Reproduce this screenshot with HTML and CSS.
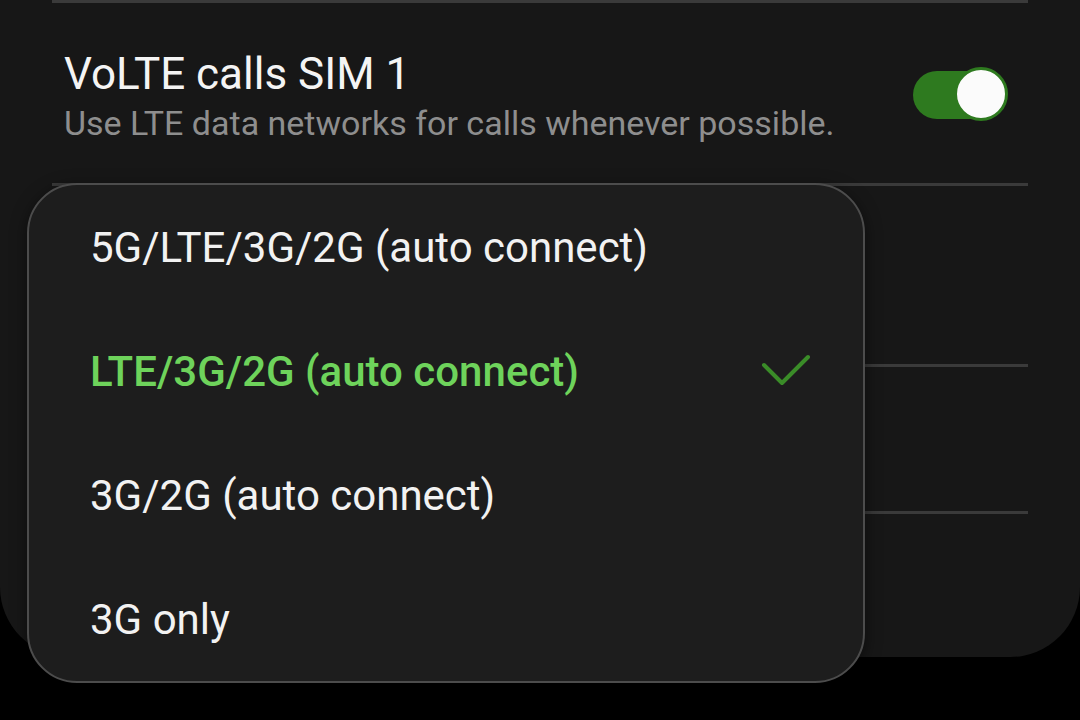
FILE: index.html
```html
<!DOCTYPE html>
<html lang="en">
<head>
    <meta charset="UTF-8">
    <meta name="viewport" content="width=device-width, initial-scale=1.0">
    <title>Network mode</title>
    <link rel="stylesheet" href="styles.css">
</head>
<body>
    <div class="panel">
        <div class="list">
            <div class="setting">
                <div class="setting-text">
                    <div class="setting-title">VoLTE calls SIM 1</div>
                    <div class="setting-summary">Use LTE data networks for calls whenever possible.</div>
                </div>
                <div class="switch on">
                    <div class="track"></div>
                    <div class="thumb"></div>
                </div>
            </div>
            <div class="setting tall"></div>
            <div class="setting short"></div>
            <div class="setting last"></div>
        </div>

        <div class="menu">
            <div class="menu-item">5G/LTE/3G/2G (auto connect)</div>
            <div class="menu-item selected">
                <span>LTE/3G/2G (auto connect)</span>
                <svg class="check" width="50" height="36" viewBox="0 0 50 36">
                    <polyline points="3,12 21,30 47,4" fill="none" stroke="#3a8c28" stroke-width="4" stroke-linecap="round" stroke-linejoin="round"/>
                </svg>
            </div>
            <div class="menu-item">3G/2G (auto connect)</div>
            <div class="menu-item">3G only</div>
        </div>
    </div>
</body>
</html>
```

FILE: styles.css
```css
body {
    margin: 0;
    padding: 0;
    width: 1080px;
    height: 720px;
    background: #000;
    font-family: Roboto, 'Noto Sans', sans-serif;
    overflow: hidden;
}
.panel {
    position: relative;
    width: 1080px;
    height: 657px;
    background: #171717;
    border-radius: 0 0 70px 70px;
}
.list {
    margin: 0 52px;
    padding-top: 2px;
    border-top: 3px solid #3a3a3a;
}
.setting {
    display: flex;
    align-items: center;
    justify-content: space-between;
    height: 178px;
    padding: 0 20px 0 12px;
    border-bottom: 3px solid #3a3a3a;
}
.setting.tall {
    height: 178px;
}
.setting.short {
    height: 144px;
}
.setting.last {
    border-bottom: none;
}
.setting-text {
    margin-top: 4px;
}
.setting-title {
    color: #f4f4f4;
    font-size: 44px;
    line-height: 52px;
}
.setting-summary {
    color: #8e8e8e;
    font-size: 34px;
    line-height: 42px;
    margin-top: 2px;
}
.switch {
    position: relative;
    width: 95px;
    height: 54px;
}
.switch .track {
    position: absolute;
    left: 0;
    top: 4px;
    width: 80px;
    height: 48px;
    border-radius: 24px;
    background: #2e7a1f;
}
.switch .thumb {
    position: absolute;
    right: 0;
    top: 0;
    width: 48px;
    height: 48px;
    border-radius: 50%;
    background: #fbfbfb;
    border: 3px solid #2e7a1f;
}
.menu {
    position: absolute;
    left: 27px;
    top: 183px;
    width: 834px;
    height: 496px;
    background: #1d1d1d;
    border: 2px solid #4c4c4c;
    border-radius: 50px;
    box-shadow: 0 4px 16px rgba(0, 0, 0, 0.5);
    display: flex;
    flex-direction: column;
}
.menu-item {
    display: flex;
    align-items: center;
    justify-content: space-between;
    height: 124px;
    padding: 0 52px 0 61px;
    color: #f2f2f2;
    font-size: 42px;
}
.menu-item.selected {
    color: #6ed35b;
    font-weight: 500;
}
```
